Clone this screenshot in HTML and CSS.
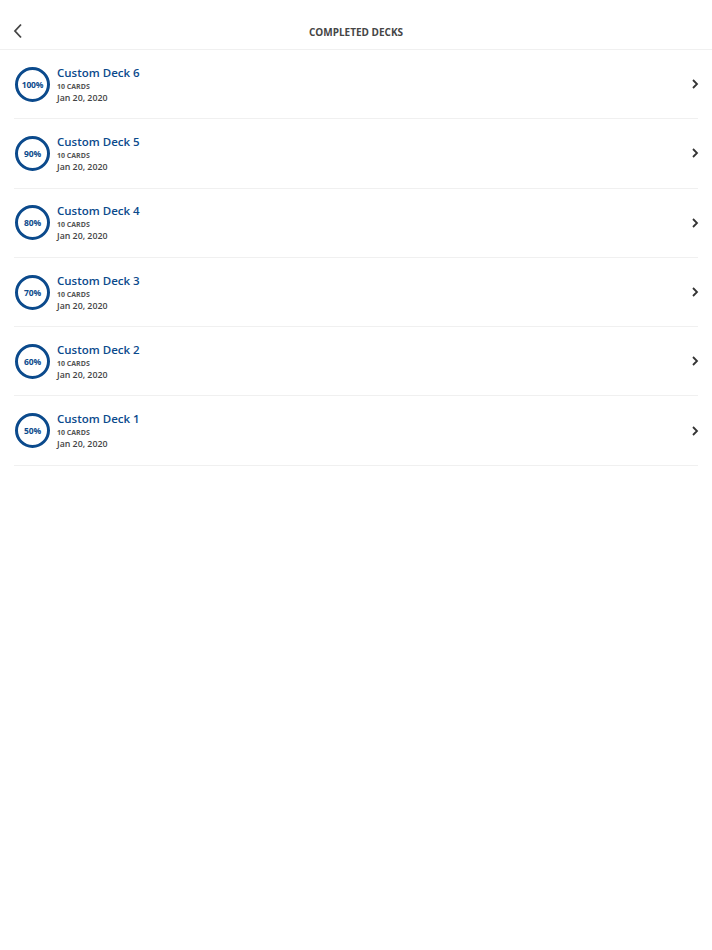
FILE: index.html
```html
<!DOCTYPE html>
<html>
<head>
<meta charset="utf-8">
<link rel="stylesheet" href="styles.css">
</head>
<body>
<header class="topbar">
  <button class="back" aria-label="Back">
    <svg width="10" height="16" viewBox="0 0 10 16"><path d="M8 1.5 L2 8 L8 14.5" fill="none" stroke="#444" stroke-width="1.8"/></svg>
  </button>
  <h1 class="title">COMPLETED DECKS</h1>
</header>
<ul class="decks">
  <li class="deck">
    <div class="ring"><span>100%</span></div>
    <div class="info"><div class="name">Custom Deck 6</div><div class="count">10 CARDS</div><div class="date">Jan 20, 2020</div></div>
    <svg class="chev" width="8" height="12" viewBox="0 0 8 12"><path d="M2 2 L6 6 L2 10" fill="none" stroke="#333" stroke-width="1.8"/></svg>
  </li>
  <li class="deck">
    <div class="ring"><span>90%</span></div>
    <div class="info"><div class="name">Custom Deck 5</div><div class="count">10 CARDS</div><div class="date">Jan 20, 2020</div></div>
    <svg class="chev" width="8" height="12" viewBox="0 0 8 12"><path d="M2 2 L6 6 L2 10" fill="none" stroke="#333" stroke-width="1.8"/></svg>
  </li>
  <li class="deck">
    <div class="ring"><span>80%</span></div>
    <div class="info"><div class="name">Custom Deck 4</div><div class="count">10 CARDS</div><div class="date">Jan 20, 2020</div></div>
    <svg class="chev" width="8" height="12" viewBox="0 0 8 12"><path d="M2 2 L6 6 L2 10" fill="none" stroke="#333" stroke-width="1.8"/></svg>
  </li>
  <li class="deck">
    <div class="ring"><span>70%</span></div>
    <div class="info"><div class="name">Custom Deck 3</div><div class="count">10 CARDS</div><div class="date">Jan 20, 2020</div></div>
    <svg class="chev" width="8" height="12" viewBox="0 0 8 12"><path d="M2 2 L6 6 L2 10" fill="none" stroke="#333" stroke-width="1.8"/></svg>
  </li>
  <li class="deck">
    <div class="ring"><span>60%</span></div>
    <div class="info"><div class="name">Custom Deck 2</div><div class="count">10 CARDS</div><div class="date">Jan 20, 2020</div></div>
    <svg class="chev" width="8" height="12" viewBox="0 0 8 12"><path d="M2 2 L6 6 L2 10" fill="none" stroke="#333" stroke-width="1.8"/></svg>
  </li>
  <li class="deck">
    <div class="ring"><span>50%</span></div>
    <div class="info"><div class="name">Custom Deck 1</div><div class="count">10 CARDS</div><div class="date">Jan 20, 2020</div></div>
    <svg class="chev" width="8" height="12" viewBox="0 0 8 12"><path d="M2 2 L6 6 L2 10" fill="none" stroke="#333" stroke-width="1.8"/></svg>
  </li>
</ul>
</body>
</html>
```
FILE: styles.css
```css
* { box-sizing: border-box; }
html, body { margin: 0; padding: 0; background: #fff; }
body { font-family: "Open Sans", "Noto Sans", sans-serif; color: #444; }

.topbar {
  position: relative;
  height: 50px;
  border-bottom: 1px solid #f0f0f0;
  display: flex;
  align-items: center;
  justify-content: center;
}
.back {
  position: absolute;
  left: 13px;
  top: 23px;
  border: 0;
  background: none;
  padding: 0;
  width: 10px;
  height: 16px;
  display: block;
}
.back svg { display: block; }
.title {
  margin: 0;
  font-size: 10px;
  font-weight: 700;
  color: #454545;
  padding-top: 14px;
}

.decks {
  list-style: none;
  margin: 0;
  padding: 0 14px;
}
.deck {
  height: 69.3px;
  display: flex;
  align-items: center;
  border-bottom: 1px solid #f0f0f0;
}
.ring {
  width: 35px;
  height: 35px;
  border: 3px solid #0b4a8c;
  border-radius: 50%;
  display: flex;
  align-items: center;
  justify-content: center;
  margin-left: 1px;
  flex: none;
}
.ring span {
  font-size: 8.5px;
  font-weight: 700;
  color: #0b4a8c;
  letter-spacing: -0.2px;
}
.info {
  margin-left: 7px;
  flex: 1;
  display: flex;
  flex-direction: column;
}
.name {
  font-size: 11.5px;
  font-weight: 600;
  color: #0b4a8c;
  line-height: 15px;
}
.count {
  font-size: 7px;
  font-weight: 700;
  color: #555;
  line-height: 11px;
  margin-top: 1px;
}
.date {
  font-size: 8.8px;
  font-weight: 600;
  color: #444;
  line-height: 12px;
}
.chev {
  flex: none;
  display: block;
  margin-right: -1px;
}
```
